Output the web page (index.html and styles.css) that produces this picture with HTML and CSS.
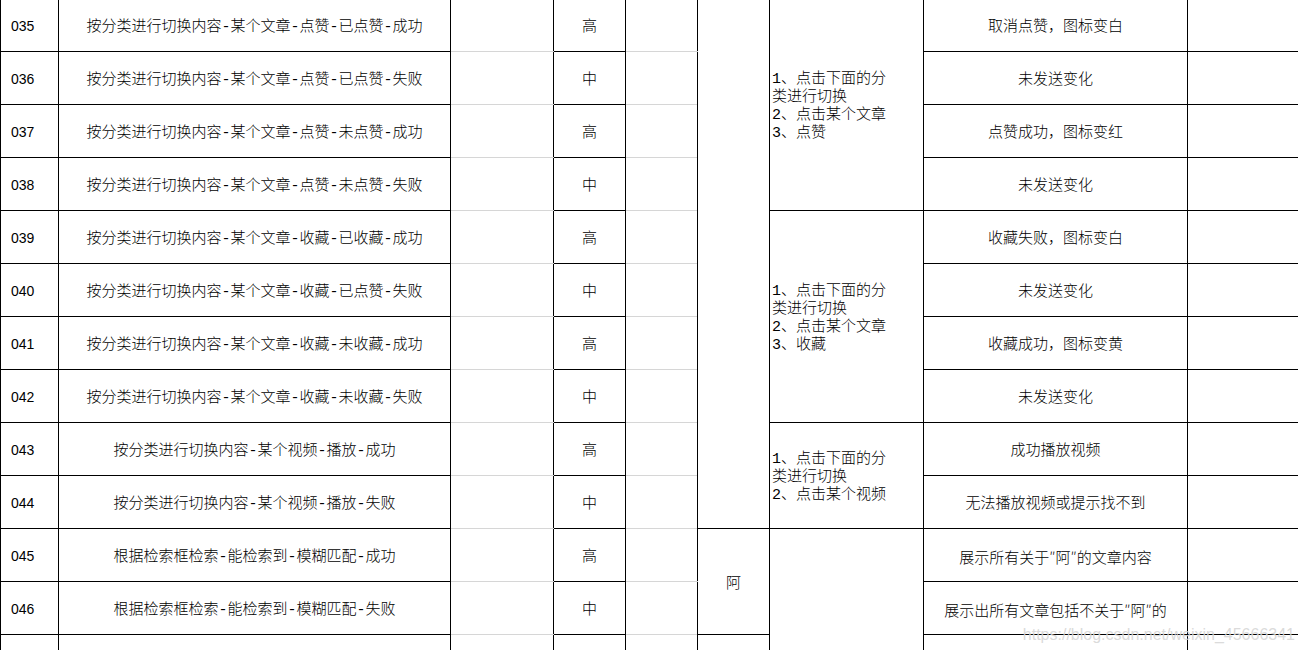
FILE: index.html
```html
<!DOCTYPE html>
<html lang="zh-CN">
<head>
<meta charset="utf-8">
<title>测试用例</title>
<link rel="stylesheet" href="styles.css">
</head>
<body>
<div class="sheet">
<table class="grid">
  <colgroup>
    <col class="c-id"><col class="c-title"><col class="c-pre"><col class="c-pri"><col class="c-x"><col class="c-data"><col class="c-steps"><col class="c-exp"><col class="c-act">
  </colgroup>
  <tbody>
    <tr>
      <td class="id">035</td><td class="t">按分类进行切换内容-某个文章-点赞-已点赞-成功</td><td class="g"></td><td class="t">高</td><td class="g"></td>
      <td class="m" rowspan="10"></td>
      <td class="steps" rowspan="4">1、点击下面的分<br>类进行切换<br>2、点击某个文章<br>3、点赞</td>
      <td class="t">取消点赞，图标变白</td><td></td>
    </tr>
    <tr>
      <td class="id">036</td><td class="t">按分类进行切换内容-某个文章-点赞-已点赞-失败</td><td class="g"></td><td class="t">中</td><td class="g"></td>
      <td class="t">未发送变化</td><td></td>
    </tr>
    <tr>
      <td class="id">037</td><td class="t">按分类进行切换内容-某个文章-点赞-未点赞-成功</td><td class="g"></td><td class="t">高</td><td class="g"></td>
      <td class="t">点赞成功，图标变红</td><td></td>
    </tr>
    <tr>
      <td class="id">038</td><td class="t">按分类进行切换内容-某个文章-点赞-未点赞-失败</td><td class="g"></td><td class="t">中</td><td class="g"></td>
      <td class="t">未发送变化</td><td></td>
    </tr>
    <tr>
      <td class="id">039</td><td class="t">按分类进行切换内容-某个文章-收藏-已收藏-成功</td><td class="g"></td><td class="t">高</td><td class="g"></td>
      <td class="steps" rowspan="4">1、点击下面的分<br>类进行切换<br>2、点击某个文章<br>3、收藏</td>
      <td class="t">收藏失败，图标变白</td><td></td>
    </tr>
    <tr>
      <td class="id">040</td><td class="t">按分类进行切换内容-某个文章-收藏-已点赞-失败</td><td class="g"></td><td class="t">中</td><td class="g"></td>
      <td class="t">未发送变化</td><td></td>
    </tr>
    <tr>
      <td class="id">041</td><td class="t">按分类进行切换内容-某个文章-收藏-未收藏-成功</td><td class="g"></td><td class="t">高</td><td class="g"></td>
      <td class="t">收藏成功，图标变黄</td><td></td>
    </tr>
    <tr>
      <td class="id">042</td><td class="t">按分类进行切换内容-某个文章-收藏-未收藏-失败</td><td class="g"></td><td class="t">中</td><td class="g"></td>
      <td class="t">未发送变化</td><td></td>
    </tr>
    <tr>
      <td class="id">043</td><td class="t">按分类进行切换内容-某个视频-播放-成功</td><td class="g"></td><td class="t">高</td><td class="g"></td>
      <td class="steps" rowspan="2">1、点击下面的分<br>类进行切换<br>2、点击某个视频</td>
      <td class="t">成功播放视频</td><td></td>
    </tr>
    <tr>
      <td class="id">044</td><td class="t">按分类进行切换内容-某个视频-播放-失败</td><td class="g"></td><td class="t">中</td><td class="g"></td>
      <td class="t">无法播放视频或提示找不到</td><td></td>
    </tr>
    <tr>
      <td class="id">045</td><td class="t">根据检索框检索-能检索到-模糊匹配-成功</td><td class="g"></td><td class="t">高</td><td class="g"></td>
      <td class="t" rowspan="2">阿</td>
      <td class="steps" rowspan="3"></td>
      <td class="t">展示所有关于<span class="q">″</span>阿<span class="q">″</span>的文章内容</td><td></td>
    </tr>
    <tr>
      <td class="id">046</td><td class="t">根据检索框检索-能检索到-模糊匹配-失败</td><td class="g"></td><td class="t">中</td><td class="g"></td>
      <td class="t">展示出所有文章包括不关于<span class="q">″</span>阿<span class="q">″</span>的</td><td></td>
    </tr>
    <tr>
      <td class="id"></td><td class="t"></td><td class="g"></td><td class="t"></td><td class="g"></td>
      <td class="t"></td>
      <td class="t"></td><td></td>
    </tr>
  </tbody>
</table>
<div class="watermark">https://blog.csdn.net/weixin_45666341</div>
</div>
</body>
</html>
```

FILE: styles.css
```css
html, body {
  margin: 0;
  padding: 0;
  background: #ffffff;
  overflow: hidden;
}

.sheet {
  position: relative;
  width: 1298px;
  height: 650px;
  overflow: hidden;
}

.grid {
  border-collapse: collapse;
  table-layout: fixed;
  width: 1320px;
  margin-top: -2px;
  font-family: "Liberation Mono", "Noto Sans CJK SC", monospace;
  font-size: 15px;
  font-weight: 300;
  color: #000;
}

.c-id { width: 58px; }
.c-title { width: 392px; }
.c-pre { width: 103px; }
.c-pri { width: 72px; }
.c-x { width: 72px; }
.c-data { width: 72px; }
.c-steps { width: 154px; }
.c-exp { width: 264px; }
.c-act { width: 133px; }

.grid td {
  height: 52px;
  padding: 0;
  border: 1px solid #000;
  text-align: center;
  vertical-align: middle;
  line-height: 18px;
  white-space: nowrap;
  overflow: hidden;
}

.grid td.t {
  height: 46px;
  padding-top: 6px;
}

.grid td.id {
  height: 51px;
  text-align: left;
  padding-left: 10px;
  padding-top: 1px;
  font-family: "Liberation Sans", "Noto Sans CJK SC", sans-serif;
  font-size: 14px;
  font-weight: 400;
}

.grid td.g {
  border-top-color: #d6d6d6;
  border-bottom-color: #d6d6d6;
}

.grid td.steps {
  text-align: left;
  padding-left: 2px;
  padding-top: 4px;
}

.q {
  font-family: "Noto Sans CJK SC", sans-serif;
}

.watermark {
  position: absolute;
  right: 3px;
  top: 627px;
  font-family: "Liberation Sans", sans-serif;
  font-size: 16px;
  line-height: 16px;
  color: rgba(214, 214, 214, 0.9);
  white-space: nowrap;
}
```
